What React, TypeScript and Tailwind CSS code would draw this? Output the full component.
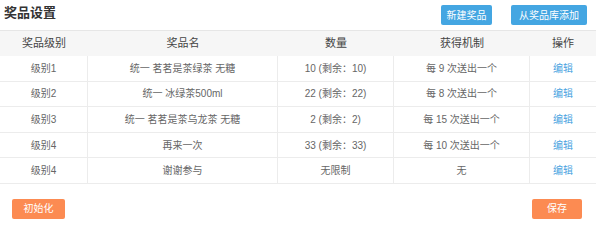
const rows = [
  { level: "级别1", name: "统一 茗茗是茶绿茶 无糖", qty: "10 (剩余：10)", rule: "每 9 次送出一个" },
  { level: "级别2", name: "统一 冰绿茶500ml", qty: "22 (剩余：22)", rule: "每 8 次送出一个" },
  { level: "级别3", name: "统一 茗茗是茶乌龙茶 无糖", qty: "2 (剩余：2)", rule: "每 15 次送出一个" },
  { level: "级别4", name: "再来一次", qty: "33 (剩余：33)", rule: "每 10 次送出一个" },
  { level: "级别4", name: "谢谢参与", qty: "无限制", rule: "无" },
];

const cols = "grid grid-cols-[88px_190px_116px_136px_66px]";

export default function App() {
  return (
    <div
      className="w-[598px] h-[242px] bg-white text-[#555]"
      style={{ fontFamily: '"Liberation Sans", "Noto Sans CJK SC", sans-serif' }}
    >
      <div className="flex items-start justify-between h-[30px]">
        <h1 className="pl-[4px] pt-[3px] text-[13px] font-bold text-[#333]">奖品设置</h1>
        <div className="flex gap-[19px] pt-[5px] pr-[11px]">
          <button className="w-[51px] h-[20px] rounded-[2px] bg-[#44a6e2] text-white text-[10px]">
            新建奖品
          </button>
          <button className="w-[76px] h-[20px] rounded-[2px] bg-[#44a6e2] text-white text-[10px]">
            从奖品库添加
          </button>
        </div>
      </div>

      <div className="w-[596px] text-[10px]">
        <div className={`${cols} h-[26px] items-center bg-[#f6f6f6] border-t border-[#e6e6e6] text-[11px] text-[#444] text-center`}>
          <div>奖品级别</div>
          <div>奖品名</div>
          <div>数量</div>
          <div>获得机制</div>
          <div>操作</div>
        </div>
        {rows.map((r, i) => (
          <div
            key={i}
            className={`${cols} h-[25.6px] border-b border-[#ececec] text-center text-[#666]`}
          >
            <div className="flex items-center justify-center border-r border-[#ececec]">{r.level}</div>
            <div className="flex items-center justify-center border-r border-[#ececec]">{r.name}</div>
            <div className="flex items-center justify-center border-r border-[#ececec]">{r.qty}</div>
            <div className="flex items-center justify-center border-r border-[#ececec]">{r.rule}</div>
            <div className="flex items-center justify-center text-[#4aa3df]">编辑</div>
          </div>
        ))}
      </div>

      <div className="flex justify-between pt-[15px] pl-[12px] pr-[16px]">
        <button className="w-[53px] h-[20px] rounded-[2px] bg-[#fc8b52] text-white text-[10px]">
          初始化
        </button>
        <button className="w-[50px] h-[20px] rounded-[2px] bg-[#fc8b52] text-white text-[10px]">
          保存
        </button>
      </div>
    </div>
  );
}
